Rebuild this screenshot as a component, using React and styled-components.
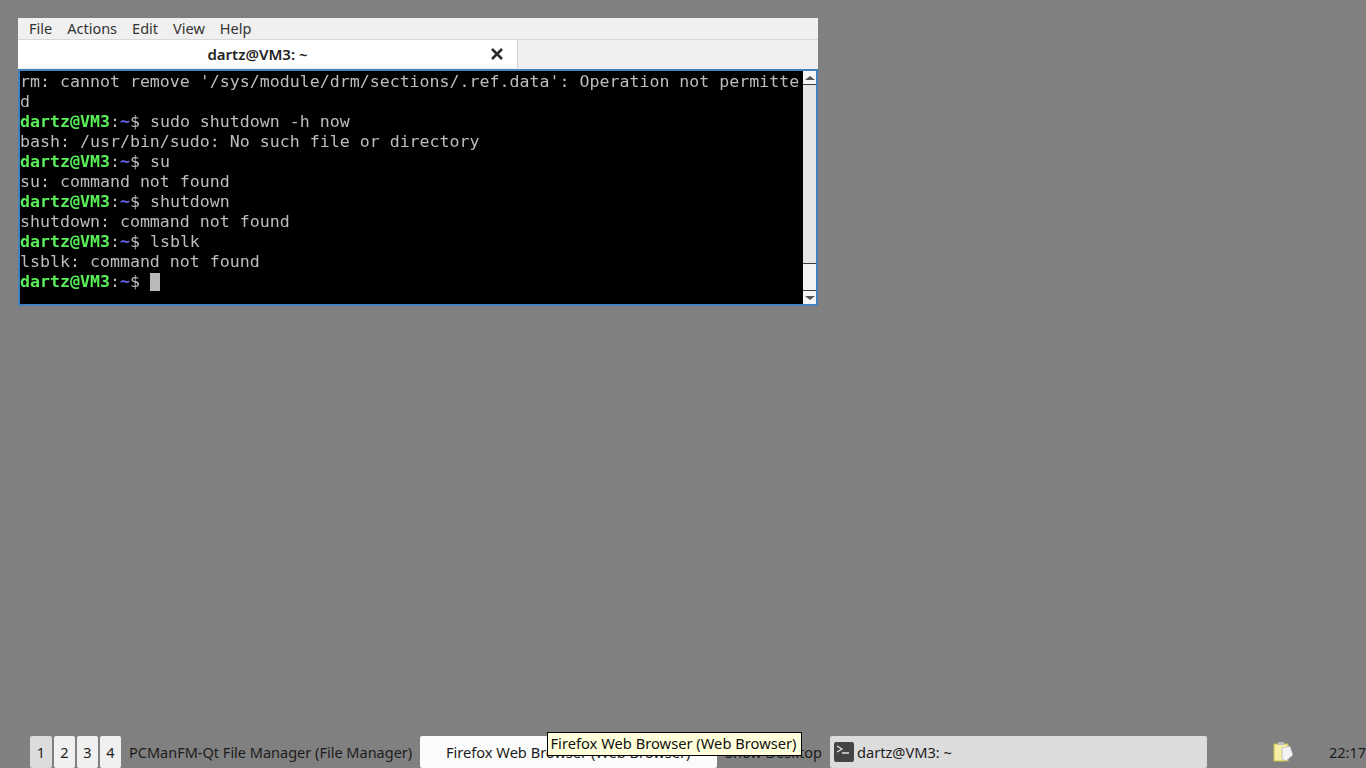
import React from "react";
import styled, { createGlobalStyle } from "styled-components";

const uiFont = `"Noto Sans", "Open Sans", sans-serif`;

const GlobalStyle = createGlobalStyle`
  html, body {
    margin: 0;
    padding: 0;
    width: 1366px;
    height: 768px;
    overflow: hidden;
    background: #808080;
  }
  * { box-sizing: border-box; }
`;

const Desktop = styled.div`
  position: relative;
  width: 1366px;
  height: 768px;
  background: #808080;
  display: flex;
  flex-direction: column;
  justify-content: flex-end;
`;

const Window = styled.div`
  position: absolute;
  left: 18px;
  top: 18px;
  width: 800px;
  height: 288px;
  display: flex;
  flex-direction: column;
  background: #efefef;
  font-family: ${uiFont};
`;

const MenuBar = styled.div`
  height: 22px;
  display: flex;
  align-items: center;
  padding: 0 0 2px 11px;
  gap: 15px;
  background: #f0f0f0;
  border-bottom: 1px solid #d9d9d9;
  font-size: 14.5px;
  color: #333;
`;

const MenuItem = styled.span``;

const TabBar = styled.div`
  height: 29px;
  display: flex;
  background: #efefef;
`;

const Tab = styled.div`
  position: relative;
  width: 500px;
  height: 28px;
  display: flex;
  align-items: center;
  justify-content: center;
  background: #fff;
  border-right: 1px solid #cfcfcf;
  font-size: 15px;
  font-weight: 600;
  color: #222;
  padding-right: 20px;
`;

const TabClose = styled.svg`
  position: absolute;
  right: 14px;
  top: 8px;
`;

const Terminal = styled.div`
  flex: 1;
  min-height: 0;
  display: flex;
  border: 2px solid #4480bc;
  background: #000;
`;

const Screen = styled.div`
  flex: 1;
  padding-top: 1px;
  background: #000;
  color: #bdbdbd;
  font-family: "DejaVu Sans Mono", monospace;
  font-size: 16.6px;
  line-height: 20px;
  white-space: pre;
  overflow: hidden;
  filter: blur(0.25px);
`;

const Line = styled.div`
  height: 20px;
`;

const User = styled.span`
  color: #5aee5a;
  font-weight: 700;
`;

const Tilde = styled.span`
  color: #6b6bf0;
  font-weight: 700;
`;

const Cursor = styled.span`
  display: inline-block;
  width: 10px;
  height: 18px;
  margin-top: 1px;
  background: #b9b9b9;
  vertical-align: top;
`;

const ScrollBar = styled.div`
  width: 13px;
  display: flex;
  flex-direction: column;
  background: #e6e6e6;
`;

const ScrollButton = styled.div`
  height: 14px;
  display: flex;
  align-items: center;
  justify-content: center;
  background: #f4f6f8;
  border-${(p) => (p.$down ? "top" : "bottom")}: 1px solid #3d3d3d;
`;

const ScrollTrack = styled.div`
  flex: 1;
`;

const ScrollThumb = styled.div`
  height: 27px;
  background: #f4f4f4;
  border-top: 1px solid #3d3d3d;
`;

const Arrow = styled.div`
  width: 0;
  height: 0;
  border-left: 5px solid transparent;
  border-right: 5px solid transparent;
  ${(p) => (p.$down ? "border-top" : "border-bottom")}: 4px solid #555;
`;

const Panel = styled.div`
  height: 32px;
  display: flex;
  align-items: stretch;
  padding-left: 30px;
  font-family: ${uiFont};
  font-size: 14.5px;
  color: #1c1c1c;
`;

const Pager = styled.div`
  display: flex;
  gap: 2px;
`;

const PagerButton = styled.div`
  width: ${(p) => (p.$wide ? 22 : 21)}px;
  display: flex;
  align-items: center;
  justify-content: center;
  border-radius: 2px;
  background: ${(p) => (p.$active ? "#dcdcdc" : "#f0f0f0")};
`;

const TaskButton = styled.div`
  width: ${(p) => p.$width}px;
  display: flex;
  align-items: center;
  gap: 3px;
  padding-left: ${(p) => p.$pad}px;
  font-size: ${(p) => (p.$bg ? "14.6px" : "14.5px")};
  white-space: nowrap;
  border-radius: 2px;
  overflow: hidden;
  background: ${(p) => p.$bg || "transparent"};
`;

const Tray = styled.div`
  width: 20px;
  margin-left: 66px;
  display: flex;
  align-items: center;
`;

const Clock = styled.div`
  margin-left: 36px;
  display: flex;
  align-items: center;
  white-space: nowrap;
`;

const Tooltip = styled.div`
  position: absolute;
  left: 547px;
  top: 732px;
  width: 255px;
  height: 24px;
  display: flex;
  align-items: center;
  justify-content: center;
  padding: 0 2px 3px 0;
  background: #ffffdc;
  border: 1px solid #000;
  font-family: ${uiFont};
  font-size: 14.7px;
  color: #111;
  white-space: nowrap;
`;

const Prompt = () => (
  <>
    <User>dartz@VM3</User>:<Tilde>~</Tilde>$
  </>
);

const output = [
  { text: "rm: cannot remove '/sys/module/drm/sections/.ref.data': Operation not permitte" },
  { text: "d" },
  { cmd: " sudo shutdown -h now" },
  { text: "bash: /usr/bin/sudo: No such file or directory" },
  { cmd: " su" },
  { text: "su: command not found" },
  { cmd: " shutdown" },
  { text: "shutdown: command not found" },
  { cmd: " lsblk" },
  { text: "lsblk: command not found" },
];

const App = () => {
  return (
    <Desktop>
      <GlobalStyle />
      <Window>
        <MenuBar>
          {["File", "Actions", "Edit", "View", "Help"].map((m) => (
            <MenuItem key={m}>{m}</MenuItem>
          ))}
        </MenuBar>
        <TabBar>
          <Tab>
            dartz@VM3: ~
            <TabClose width="12" height="12" viewBox="0 0 12 12">
              <path d="M1 1 L11 11 M11 1 L1 11" stroke="#2a2a2a" strokeWidth="2.6" />
            </TabClose>
          </Tab>
        </TabBar>
        <Terminal>
          <Screen>
            {output.map((l, i) => (
              <Line key={i}>
                {l.cmd ? (
                  <>
                    <Prompt />
                    {l.cmd}
                  </>
                ) : (
                  l.text
                )}
              </Line>
            ))}
            <Line>
              <Prompt /> <Cursor />
            </Line>
          </Screen>
          <ScrollBar>
            <ScrollButton>
              <Arrow />
            </ScrollButton>
            <ScrollTrack />
            <ScrollThumb />
            <ScrollButton $down>
              <Arrow $down />
            </ScrollButton>
          </ScrollBar>
        </Terminal>
      </Window>
      <Panel>
        <Pager>
          <PagerButton $wide $active>1</PagerButton>
          <PagerButton>2</PagerButton>
          <PagerButton>3</PagerButton>
          <PagerButton>4</PagerButton>
        </Pager>
        <TaskButton $width={299} $pad={8}>PCManFM-Qt File Manager (File Manager)</TaskButton>
        <TaskButton $width={297} $pad={26} $bg="#fbfbfb">Firefox Web Browser (Web Browser)</TaskButton>
        <TaskButton $width={113} $pad={8}>Show Desktop</TaskButton>
        <TaskButton $width={377} $pad={4} $bg="#dcdcdc">
          <svg width="20" height="20" viewBox="0 0 20 20">
            <rect x="0" y="0" width="20" height="20" rx="2" fill="#444" />
            <path d="M3 4 L8 7 L3 10" fill="none" stroke="#e4e4e4" strokeWidth="1.3" />
            <path d="M8 11 H15" stroke="#e4e4e4" strokeWidth="1.3" />
          </svg>
          dartz@VM3: ~
        </TaskButton>
        <Tray>
          <svg width="20" height="20" viewBox="0 0 20 20">
            <rect x="1" y="2" width="14" height="17" fill="#f6efa6" stroke="#c9c04a" />
            <rect x="5" y="0" width="6" height="3" fill="#bdbdbd" />
            <path d="M9 6 L17 4 L20 13 L13 19 L9 17 Z" fill="#f4f4f4" stroke="#a5a5a5" strokeWidth="0.6" />
          </svg>
        </Tray>
        <Clock>22:17</Clock>
      </Panel>
      <Tooltip>Firefox Web Browser (Web Browser)</Tooltip>
    </Desktop>
  );
};

export default App;
